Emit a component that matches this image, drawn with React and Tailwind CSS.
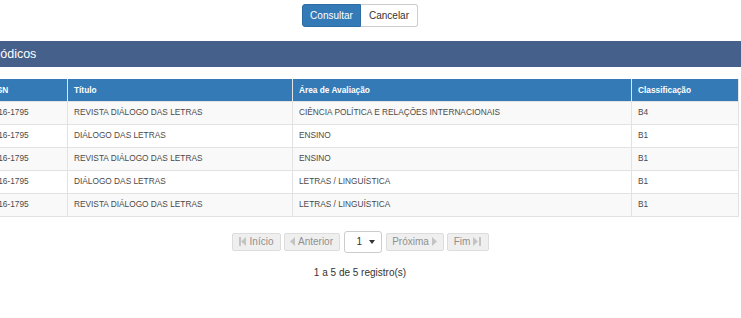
import React from 'react';

const rows = [
  { issn: '2316-1795', titulo: 'REVISTA DIÁLOGO DAS LETRAS', area: 'CIÊNCIA POLÍTICA E RELAÇÕES INTERNACIONAIS', classif: 'B4' },
  { issn: '2316-1795', titulo: 'DIÁLOGO DAS LETRAS', area: 'ENSINO', classif: 'B1' },
  { issn: '2316-1795', titulo: 'REVISTA DIÁLOGO DAS LETRAS', area: 'ENSINO', classif: 'B1' },
  { issn: '2316-1795', titulo: 'DIÁLOGO DAS LETRAS', area: 'LETRAS / LINGUÍSTICA', classif: 'B1' },
  { issn: '2316-1795', titulo: 'REVISTA DIÁLOGO DAS LETRAS', area: 'LETRAS / LINGUÍSTICA', classif: 'B1' },
];

const StepBack = () => (
  <svg width="8" height="9" viewBox="0 0 8 9" className="fill-[#c4c4c4]">
    <rect x="0" y="0" width="2" height="9" />
    <path d="M7 0 L2 4.5 L7 9 Z" />
  </svg>
);
const Back = () => (
  <svg width="5" height="9" viewBox="0 0 5 9" className="fill-[#c4c4c4]">
    <path d="M5 0 L0 4.5 L5 9 Z" />
  </svg>
);
const Fwd = () => (
  <svg width="5" height="9" viewBox="0 0 5 9" className="fill-[#c4c4c4]">
    <path d="M0 0 L5 4.5 L0 9 Z" />
  </svg>
);
const StepFwd = () => (
  <svg width="8" height="9" viewBox="0 0 8 9" className="fill-[#c4c4c4]">
    <path d="M0 0 L5 4.5 L0 9 Z" />
    <rect x="6" y="0" width="2" height="9" />
  </svg>
);

const PageBtn = ({ children, w }) => (
  <div className={`flex h-[18px] ${w} items-center justify-center gap-[3px] rounded-[2px] border border-[#dcdcdc] bg-[#efefef] text-[10px] text-[#909090]`}>
    {children}
  </div>
);

const th = 'h-[22px] border-x border-[#e4e4e4] px-[6px] text-left align-middle font-bold text-white';
const td = 'h-[23px] border border-[#e2e2e2] px-[6px] align-middle text-[#4a4a4a]';

export default function App() {
  return (
    <div className="h-[318px] w-[741px] overflow-hidden bg-white font-['Liberation_Sans',Arial,sans-serif]">
      <div className="ml-[-30px] w-[780px] pt-[4px]">
        <div className="flex justify-center">
          <div className="flex h-[23px] w-[59px] items-center justify-center rounded-l-[3px] border border-[#2e6da4] bg-[#337ab7] text-[10px] text-white">
            Consultar
          </div>
          <div className="flex h-[23px] w-[57px] items-center justify-center rounded-r-[3px] border border-l-0 border-[#ccc] bg-white text-[10px] text-[#333]">
            Cancelar
          </div>
        </div>

        <div className="mt-[14px] flex h-[26px] items-center bg-[#44608b] pl-[8px] text-[12.5px] text-white">
          Periódicos
        </div>

        <table className="ml-[12px] mt-[12px] w-[756px] table-fixed border-collapse text-[8.3px]">
          <colgroup>
            <col className="w-[85px]" />
            <col className="w-[225px]" />
            <col className="w-[339px]" />
            <col className="w-[107px]" />
          </colgroup>
          <thead>
            <tr className="bg-[#337ab7]">
              <th className={th}>ISSN</th>
              <th className={th}>Título</th>
              <th className={th}>Área de Avaliação</th>
              <th className={th}>Classificação</th>
            </tr>
          </thead>
          <tbody>
            {rows.map((r, i) => (
              <tr key={i} className={i % 2 === 0 ? 'bg-[#f9f9f9]' : 'bg-white'}>
                <td className={td}>{r.issn}</td>
                <td className={td}>{r.titulo}</td>
                <td className={td}>{r.area}</td>
                <td className={td}>{r.classif}</td>
              </tr>
            ))}
          </tbody>
        </table>

        <div className="mt-[14px] flex items-center justify-center gap-[3px]">
          <PageBtn w="w-[49px]"><StepBack />Início</PageBtn>
          <PageBtn w="w-[56px]"><Back />Anterior</PageBtn>
          <div className="mx-[1px] flex h-[22px] w-[38px] items-center justify-between rounded-[3px] border border-[#ccc] bg-white pl-[12px] pr-[6px] text-[10px] text-[#333]">
            <span>1</span>
            <svg width="6" height="4" viewBox="0 0 6 4" className="fill-[#333]">
              <path d="M0 0 L6 0 L3 4 Z" />
            </svg>
          </div>
          <PageBtn w="w-[58px]">Próxima<Fwd /></PageBtn>
          <PageBtn w="w-[42px]">Fim<StepFwd /></PageBtn>
        </div>

        <div className="mt-[12px] text-center text-[10px] text-[#333]">1 a 5 de 5 registro(s)</div>
      </div>
    </div>
  );
}
